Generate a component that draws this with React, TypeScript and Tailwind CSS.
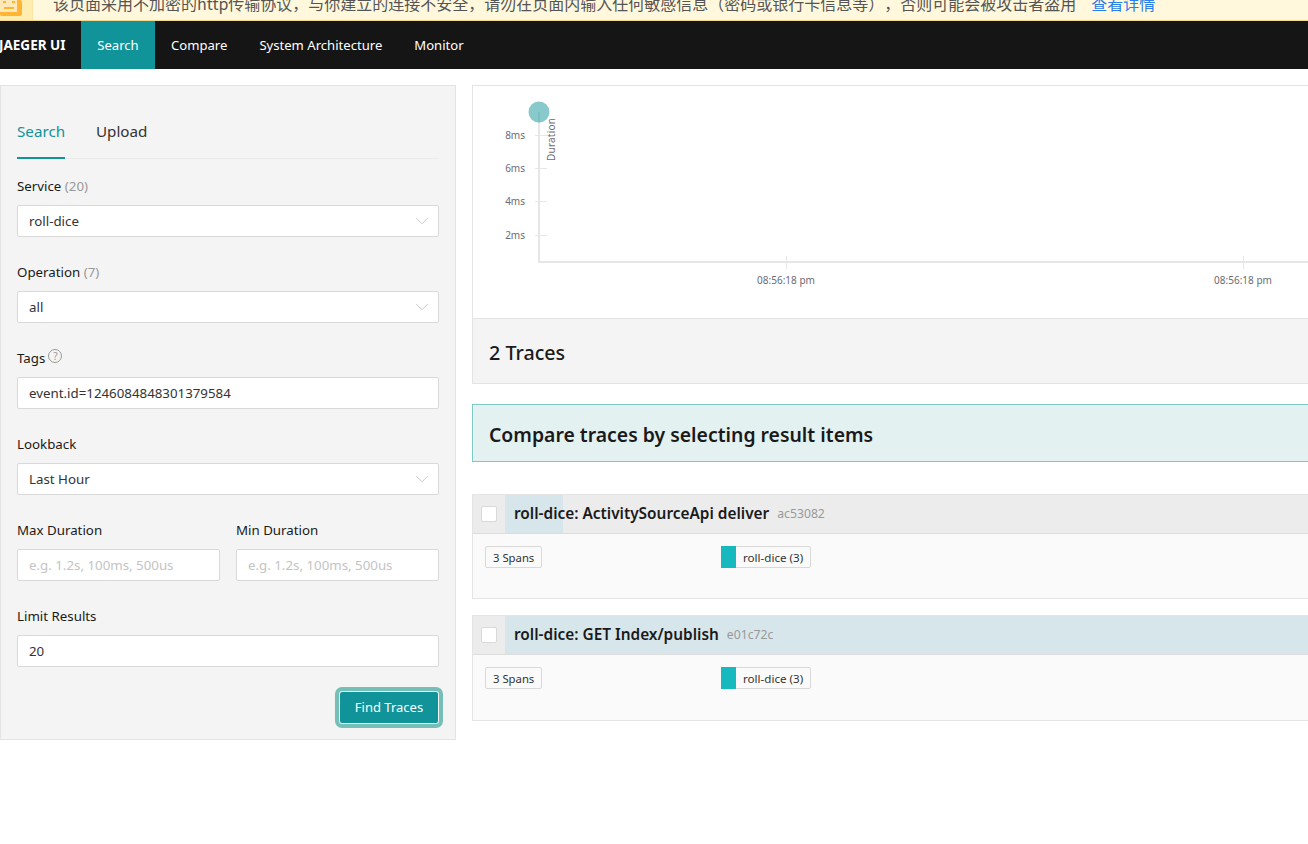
import React from 'react';
import { ChevronDown } from 'lucide-react';

const FONT = "font-['Noto_Sans','Open_Sans',sans-serif]";

const navItems = ['Compare', 'System Architecture', 'Monitor'];

const Label: React.FC<{ text: string; count?: string }> = ({ text, count }) => (
    <div className="h-[22px] text-[13.3px] leading-[22px] text-[#1a1a1a]">
        {text}
        {count && <span className="text-[#999]"> {count}</span>}
    </div>
);

const SelectBox: React.FC<{ value: string }> = ({ value }) => (
    <div className="mt-[8px] h-[32px] flex items-center justify-between border border-[#d9d9d9] rounded-[2px] bg-white pl-[11px] pr-[5px] text-[13.3px] text-[#333]">
        <span className="pt-[2px]">{value}</span>
        <ChevronDown size={22} strokeWidth={1} className="text-[#c4c4c4]" />
    </div>
);

const TextBox: React.FC<{ value?: string; placeholder?: string }> = ({ value, placeholder }) => (
    <div className="mt-[8px] h-[32px] flex items-center border border-[#d9d9d9] rounded-[2px] bg-white px-[11px] pt-[2px] text-[13.3px] text-[#333] whitespace-nowrap overflow-hidden">
        {value ?? <span className="text-[#c4c4c4]">{placeholder}</span>}
    </div>
);

const SearchPanel: React.FC = () => (
    <aside className="w-[456px] h-[655px] shrink-0 border border-[#e4e4e4] bg-[#f4f4f4] px-[16px] pt-[28px]">
        <div className="flex h-[45px] border-b border-[#ebebeb] text-[15.2px] leading-[34px]">
            <div className="w-[48px] h-[45px] border-b-2 border-[#11939a] text-[#11939a]">Search</div>
            <div className="ml-[31px] text-[#333]">Upload</div>
        </div>
        <div className="mt-[16px]">
            <Label text="Service" count="(20)" />
            <SelectBox value="roll-dice" />
        </div>
        <div className="mt-[24px]">
            <Label text="Operation" count="(7)" />
            <SelectBox value="all" />
        </div>
        <div className="mt-[24px]">
            <div className="flex items-start gap-[3px] h-[22px] text-[13.3px] leading-[23px] text-[#1a1a1a]">
                Tags
                <span className="w-[14px] h-[14px] mt-[2px] rounded-full border border-[#999] text-[#999] text-[10px] leading-[12px] text-center">?</span>
            </div>
            <TextBox value="event.id=1246084848301379584" />
        </div>
        <div className="mt-[24px]">
            <Label text="Lookback" />
            <SelectBox value="Last Hour" />
        </div>
        <div className="mt-[24px] grid grid-cols-2 gap-[16px]">
            <div>
                <Label text="Max Duration" />
                <TextBox placeholder="e.g. 1.2s, 100ms, 500us" />
            </div>
            <div>
                <Label text="Min Duration" />
                <TextBox placeholder="e.g. 1.2s, 100ms, 500us" />
            </div>
        </div>
        <div className="mt-[24px]">
            <Label text="Limit Results" />
            <TextBox value="20" />
        </div>
        <div className="mt-[24px] flex justify-end">
            <button className="h-[33px] w-[100px] rounded-[3px] bg-[#11939a] text-white text-[13px] border-[1.5px] border-[#eef5f4] outline-[4px] outline-[#76bfb8]">
                Find Traces
            </button>
        </div>
    </aside>
);

const Chart: React.FC = () => (
    <svg width="836" height="232" className="block">
        <g stroke="#e6e6e6" strokeWidth="1">
            <line x1="62" x2="74" y1="49.5" y2="49.5" />
            <line x1="62" x2="74" y1="82.5" y2="82.5" />
            <line x1="62" x2="74" y1="115.5" y2="115.5" />
            <line x1="62" x2="74" y1="149.5" y2="149.5" />
            <line x1="313.5" x2="313.5" y1="170" y2="183" />
            <line x1="770.5" x2="770.5" y1="170" y2="183" />
        </g>
        <line x1="66" x2="66" y1="26" y2="176" stroke="#e6e6e6" strokeWidth="2" />
        <line x1="65" x2="836" y1="176" y2="176" stroke="#e6e6e6" strokeWidth="2" />
        <circle cx="66" cy="26" r="10.5" fill="#12939a" fillOpacity="0.5" />
        <g fill="#6b6b76" fontSize="10" textAnchor="end">
            <text x="52" y="53">8ms</text>
            <text x="52" y="86">6ms</text>
            <text x="52" y="119">4ms</text>
            <text x="52" y="153">2ms</text>
        </g>
        <g fill="#6b6b76" fontSize="10" textAnchor="middle">
            <text x="313" y="198">08:56:18 pm</text>
            <text x="770" y="198">08:56:18 pm</text>
        </g>
        <text transform="translate(82 75) rotate(-90)" fill="#6b6b76" fontSize="10" letterSpacing="0.2">Duration</text>
    </svg>
);

const TraceRow: React.FC<{ name: string; id: string; barClass: string; bodyClass: string }> = ({ name, id, barClass, bodyClass }) => (
    <div className="border border-[#e4e4e4] bg-[#fafafa]">
        <div className="flex h-[39px] border-b border-[#dddddd] bg-[#ececec]">
            <div className="w-[32px] shrink-0 flex items-center justify-center">
                <div className="w-[16px] h-[16px] bg-white border border-[#d9d9d9] rounded-[2px]" />
            </div>
            <div className="relative flex-1 flex items-center pl-[9px]">
                <div className={`absolute left-0 top-0 bottom-0 bg-[#d7e6ea] ${barClass}`} />
                <span className="relative text-[15.4px] font-semibold text-[#1a1a1a]">{name}</span>
                <span className="relative ml-[8px] text-[12.2px] text-[#999]">{id}</span>
            </div>
        </div>
        <div className={`flex items-start pt-[12px] pl-[12px] ${bodyClass}`}>
            <div className="w-[236px] shrink-0">
                <div className="w-fit h-[22px] px-[7px] border border-[#d9d9d9] rounded-[2px] bg-[#fafafa] text-[11.3px] leading-[21px] text-[#333]">3 Spans</div>
            </div>
            <div className="flex h-[22px] border border-[#d9d9d9] rounded-[2px] text-[11.6px] leading-[21px] text-[#333]">
                <span className="w-[15px] -my-px -ml-px bg-[#17b8be]" />
                <span className="pl-[7px] pr-[7px]">roll-dice (3)</span>
            </div>
        </div>
    </div>
);

const App: React.FC = () => {
    return (
        <div className={`relative w-[1308px] h-[844px] overflow-hidden bg-white ${FONT}`}>
            <div className="flex h-[21px] overflow-hidden border-b border-[#f5d98f] bg-[#fff8dc]">
                <div className="w-[33px] h-[20px] shrink-0 bg-[#ffedb0] border-r border-[#fde6a5]">
                    <svg width="22" height="16" className="block">
                        <rect width="22" height="16" rx="2" fill="#ffb533" />
                        <rect x="0" y="0" width="17" height="12" fill="#ffe9b8" />
                        <rect x="3" y="1" width="3" height="2" fill="#ffb533" />
                        <rect x="12" y="1" width="3" height="2" fill="#ffb533" />
                        <rect x="4" y="7" width="10" height="2" fill="#ffb533" />
                    </svg>
                </div>
                <div className="ml-[20px] -mt-[9px] whitespace-nowrap text-[16px] leading-[24px] text-[#555] [text-spacing-trim:space-all] font-['Noto_Sans_CJK_SC','Noto_Sans',sans-serif]">
                    该页面采用不加密的http传输协议，与你建立的连接不安全，请勿在页面内输入任何敏感信息（密码或银行卡信息等），否则可能会被攻击者盗用
                    <span className="ml-[15px] text-[#2b7de9]">查看详情</span>
                </div>
            </div>

            <nav className="flex h-[48px] bg-[#151515] text-[13.1px] leading-[48px] text-white">
                <div className="w-[81px] shrink-0 overflow-hidden">
                    <div className="-ml-[1px] text-[13.5px] font-bold whitespace-nowrap">JAEGER UI</div>
                </div>
                <div className="w-[74px] text-center bg-[#11939a]">Search</div>
                {navItems.map((item) => (
                    <div key={item} className="px-[16px]">{item}</div>
                ))}
            </nav>

            <main className="flex gap-[16px] pt-[16px]">
                <SearchPanel />
                <div className="w-[860px] shrink-0">
                    <div className="border border-[#e4e4e4] bg-white">
                        <Chart />
                        <div className="h-[65px] flex items-center border-t border-[#e4e4e4] bg-[#f4f4f4] pl-[16px] pt-[3px] text-[19.7px] font-medium text-[#1a1a1a]">2 Traces</div>
                    </div>
                    <div className="mt-[20px] h-[58px] flex items-center border border-[#7fc8c4] bg-[#e3f1f1] pl-[16px] pt-[3px] text-[19.4px] font-semibold text-[#1a1a1a]">
                        Compare traces by selecting result items
                    </div>
                    <div className="mt-[32px] flex flex-col gap-[16px]">
                        <TraceRow name="roll-dice: ActivitySourceApi deliver" id="ac53082" barClass="w-[58px]" bodyClass="h-[64px]" />
                        <TraceRow name="roll-dice: GET Index/publish" id="e01c72c" barClass="w-full" bodyClass="h-[65px]" />
                    </div>
                </div>
            </main>
        </div>
    );
};

export default App;
